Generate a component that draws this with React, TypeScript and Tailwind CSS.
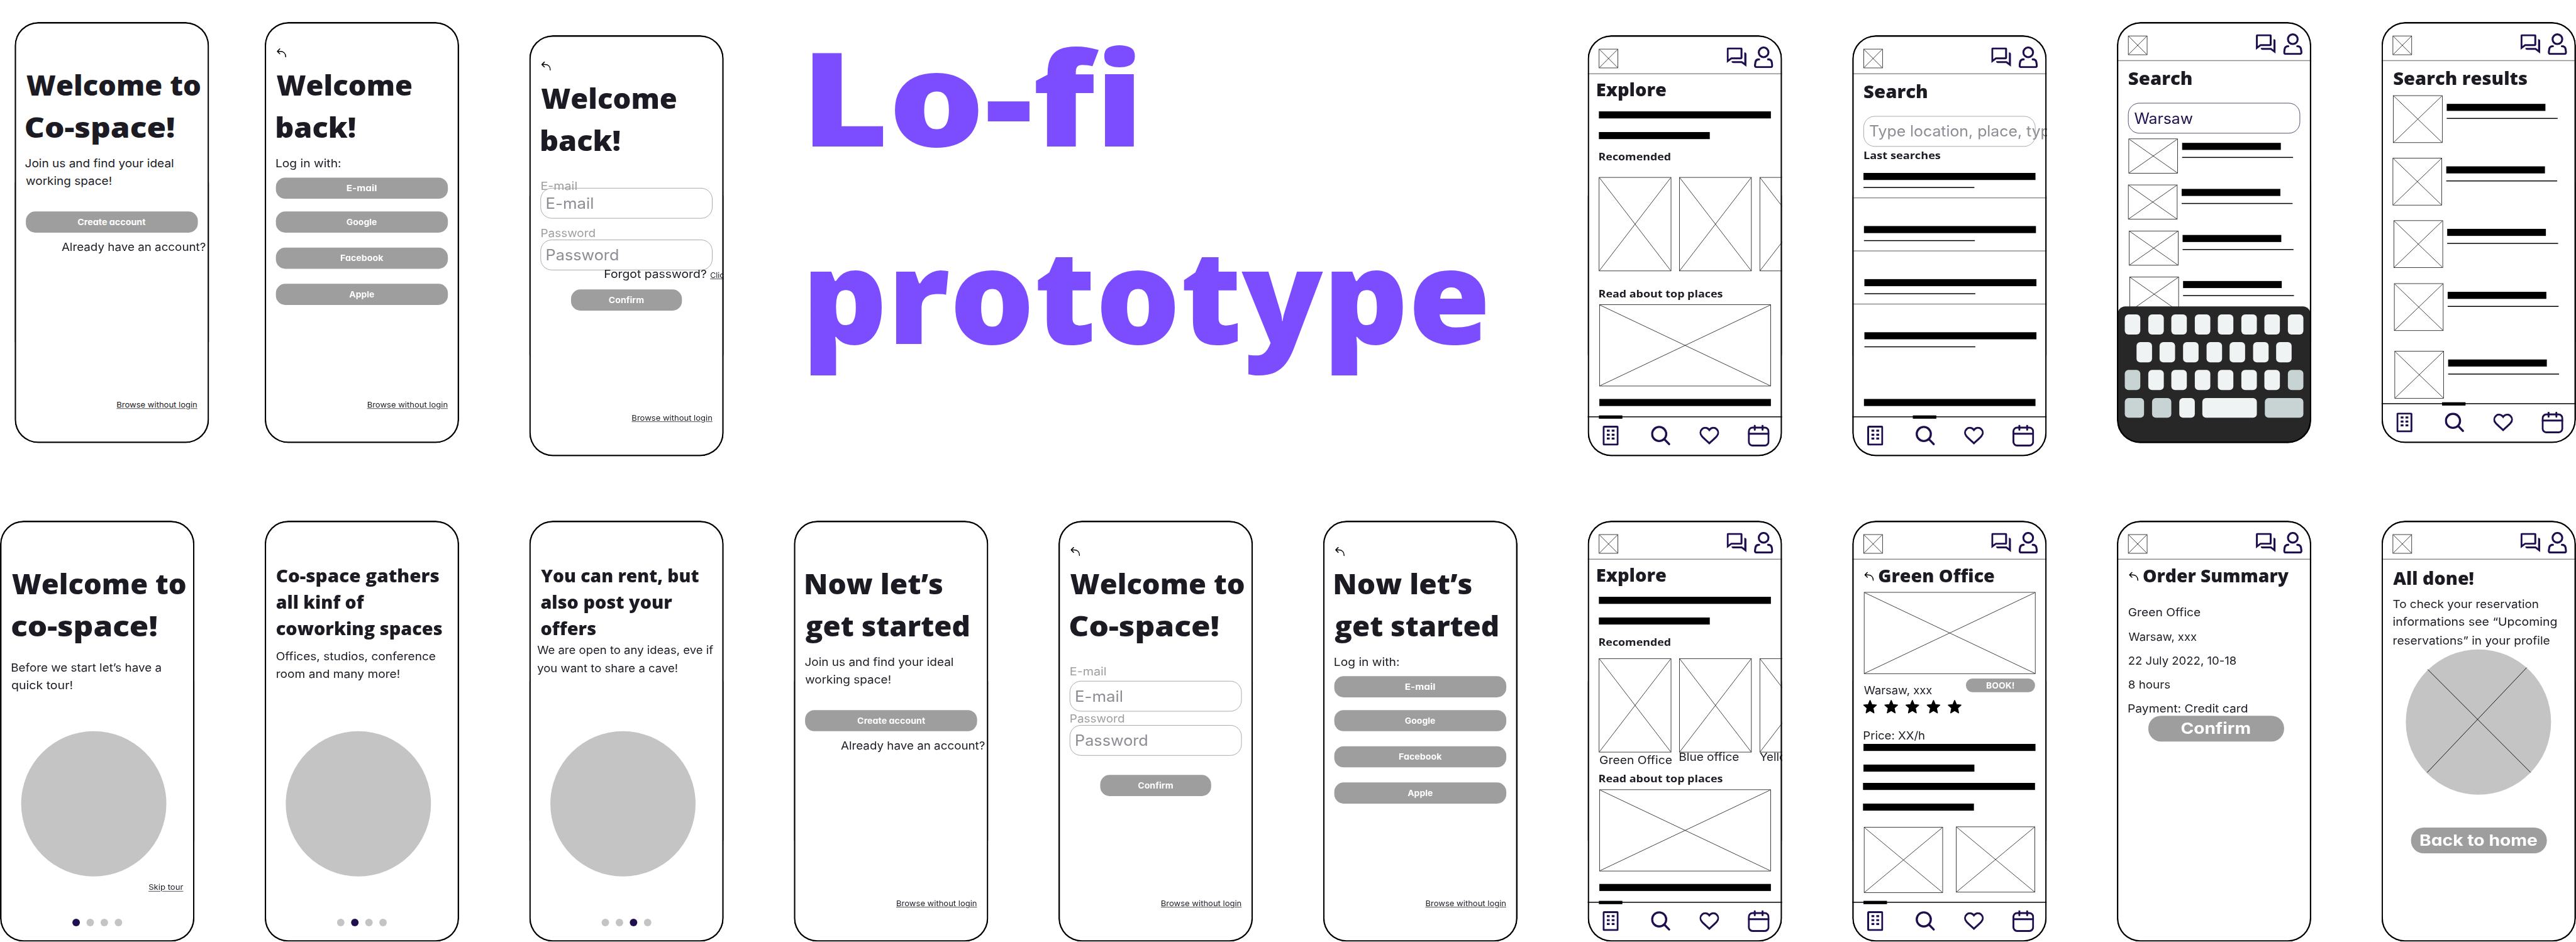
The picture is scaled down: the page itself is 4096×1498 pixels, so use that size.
import { useLayoutEffect, useRef, type ReactNode } from "react";
import clsx from "clsx";

/** A single line of text, stretched horizontally so that its ink is `w` pixels wide. */
function Line({ w, className, children }: { w: number; className?: string; children: string }) {
  const ref = useRef<HTMLSpanElement>(null);
  useLayoutEffect(() => {
    const el = ref.current;
    const ctx = document.createElement("canvas").getContext("2d");
    if (!el || !ctx) return;
    const cs = getComputedStyle(el);
    ctx.font = `${cs.fontWeight} ${cs.fontSize} ${cs.fontFamily}`;
    ctx.letterSpacing = "0.01px";
    const m = ctx.measureText(children);
    const scale = w / (m.actualBoundingBoxLeft + m.actualBoundingBoxRight);
    el.style.transform = `scaleX(${scale})`;
    el.style.marginLeft = `${m.actualBoundingBoxLeft * scale}px`;
    el.style.marginRight = `${el.offsetWidth * (scale - 1)}px`;
  }, [w, children]);
  return (
    <span ref={ref} className={clsx("block w-max origin-left whitespace-nowrap [font-variant-ligatures:none]", className)}>
      {children}
    </span>
  );
}

type TextLine = [string, number];

function Lines({ lines, className }: { lines: TextLine[]; className?: string }) {
  return (
    <div className={className}>
      {lines.map(([text, w]) => (
        <Line key={text} w={w}>
          {text}
        </Line>
      ))}
    </div>
  );
}

const display = "font-['Open_Sans',sans-serif] font-extrabold text-[#1c1b24]";
const h1 = clsx(display, "ml-[25px] text-[59px] leading-[90px]");
const h2 = clsx(display, "text-[37px] leading-[56px]");
const h3 = "ml-6 font-['Open_Sans',sans-serif] text-[22px] leading-[34px] font-bold text-[#1c1b24]";
const body = "text-[24px] leading-[38.4px] text-[#1c1b24]";

function Phone({ at, children }: { at: string; children: ReactNode }) {
  return (
    <section
      className={clsx(
        "absolute flex h-[896px] w-[414px] flex-col overflow-hidden rounded-[50px] bg-white after:pointer-events-none after:absolute after:inset-0 after:rounded-[50px] after:shadow-[inset_0_0_0_3.2px_#000] after:content-['']",
        at,
      )}
    >
      {children}
    </section>
  );
}

function Placeholder({ className }: { className?: string }) {
  return (
    <div className={clsx("shrink-0 border border-black", className)}>
      <svg className="block size-full" viewBox="0 0 100 100" preserveAspectRatio="none">
        <path d="M0 0L100 100M100 0L0 100" stroke="#000" strokeWidth="1" fill="none" vectorEffect="non-scaling-stroke" />
      </svg>
    </div>
  );
}

function Bar({ className }: { className?: string }) {
  return <div className={clsx("h-[15px] shrink-0 bg-black", className)} />;
}

function BackArrow({ className }: { className?: string }) {
  return (
    <svg className={clsx("h-[19px] w-[20px] shrink-0", className)} viewBox="0 0 20 19" fill="none" stroke="#000" strokeWidth="2" strokeLinecap="round" strokeLinejoin="round">
      <path d="M6.3 1L1 6.3L6.3 11.4M1.4 6.3H7.5C14 6.3 18.9 10.5 18.9 18" />
    </svg>
  );
}

function ChatIcon() {
  return (
    <svg className="h-[41px] w-[42px]" viewBox="0 0 42 41" fill="#200f4f">
      <path fillRule="evenodd" d="M3.5 0H30A3.5 3.5 0 0 1 33.5 3.5V21.5A3.5 3.5 0 0 1 30 25H10.5L0 33V3.5A3.5 3.5 0 0 1 3.5 0ZM4 4V25L9.3 21H29.4V4Z" />
      <path d="M37.4 10.3C40.4 10.3 42 11.6 42 14V41L31.3 33H14C11.6 33 10.3 31.6 10.3 29H32.6L37.4 32.6Z" />
    </svg>
  );
}

function PersonIcon() {
  return (
    <svg className="h-[46px] w-[41px]" viewBox="0 0 41 46" fill="none" stroke="#200f4f" strokeWidth="4.2" strokeLinecap="round">
      <circle cx="20.5" cy="12.4" r="10.3" />
      <path d="M11 27.3C6 27.3 4 28.8 3.2 33L2.2 39.5C2 42.5 3.2 43.8 6 43.8H35C37.8 43.8 39 42.5 38.8 39.5L37.8 33C37 28.8 35 27.3 30 27.3" />
    </svg>
  );
}

function BuildingIcon() {
  return (
    <svg className="h-[42px] w-[34px]" viewBox="0 0 34 42" fill="#200f4f">
      <rect x="2" y="2" width="30" height="38" rx="1.5" fill="none" stroke="#200f4f" strokeWidth="4" />
      <path d="M9 8.3h6v4.3H9zM19.3 8.3h6v4.3h-6zM9 17h6v4.2H9zM19.3 17h6v4.2h-6zM9 25h6v4.3H9zM19.3 25h6v4.3h-6z" />
    </svg>
  );
}

function SearchIcon() {
  return (
    <svg className="h-[42px] w-[41px]" viewBox="0 0 41 42" fill="none" stroke="#200f4f" strokeWidth="4.5" strokeLinecap="round">
      <circle cx="17.3" cy="17.5" r="15" />
      <path d="M28.5 28.8L38.5 39" />
    </svg>
  );
}

function HeartIcon() {
  return (
    <svg className="h-[38px] w-[42px]" viewBox="0 0 42 38" fill="none" stroke="#200f4f" strokeWidth="4" strokeLinejoin="miter">
      <path d="M21 7C17 1.5 10 .8 5.8 4.8C1 9.3 1 15.5 5 20C9.5 25.3 15.5 30 21 35.3C26.5 30 32.5 25.3 37 20C41 15.5 41 9.3 36.2 4.8C32 .8 25 1.5 21 7Z" />
    </svg>
  );
}

function CalendarIcon() {
  return (
    <svg className="size-[46px]" viewBox="0 0 46 46" fill="none" stroke="#200f4f" strokeWidth="4" strokeLinecap="round">
      <rect x="2" y="6" width="42" height="38" rx="8" />
      <path d="M2 19H44M14.7 2V10.7M31.3 2V10.7" />
    </svg>
  );
}

function Header() {
  return (
    <header className="flex h-[83px] shrink-0 items-start border-b-2 border-[#8e8c94] pl-6">
      <Placeholder className="mt-[29px] size-[41px]" />
      <div className="mt-[26px] ml-[231px]">
        <ChatIcon />
      </div>
      <div className="mt-6 ml-[16px]">
        <PersonIcon />
      </div>
    </header>
  );
}

function TabBar({ active }: { active: "home" | "search" }) {
  return (
    <nav className="relative mt-auto flex h-[85px] shrink-0 items-center border-t-2 border-black pb-[5px] pl-8">
      <div className={clsx("absolute -top-[4px] h-[7px] w-[50px] bg-black", active === "home" ? "left-6" : "left-[129px]")} />
      <BuildingIcon />
      <div className="ml-[69px]">
        <SearchIcon />
      </div>
      <div className="ml-[62px]">
        <HeartIcon />
      </div>
      <div className="ml-[61px]">
        <CalendarIcon />
      </div>
    </nav>
  );
}

function Button({ label, w, className }: { label: string; w: number; className?: string }) {
  return (
    <button
      type="button"
      className={clsx(
        "flex shrink-0 items-center justify-center bg-[#9e9e9e] font-bold text-white [font-feature-settings:'cv11']",
        className,
      )}
    >
      <Line w={w}>{label}</Line>
    </button>
  );
}

const wide = "ml-6 h-[45px] w-[366px] rounded-[20px] text-[18px]";
const large = "h-[55px] w-[289px] rounded-[27px] text-[33px]";

function Field({ text, w, className, tone = "border-[#8e8c94] text-[#8e8c94]" }: { text: string; w: number; className?: string; tone?: string }) {
  return (
    <div className={clsx("ml-6 flex h-[65px] w-[366px] shrink-0 items-center rounded-[24px] border pl-[12px] text-[32px]", tone, className)}>
      <Line w={w}>{text}</Line>
    </div>
  );
}

function FooterLink() {
  return (
    <div className="mt-auto mb-[70px] ml-[219px] text-[16px] leading-6 text-[#1c1b24] underline underline-offset-2">
      <Line w={170.5}>Browse without login</Line>
    </div>
  );
}

const welcomeTo: TextLine = ["Welcome to", 370.5];
const coSpace: TextLine = ["Co-space!", 315];
const nowLets: TextLine[] = [
  ["Now let’s", 291.5],
  ["get started", 347.5],
];
const welcomeBack: TextLine[] = [
  ["Welcome", 287.5],
  ["back!", 167.5],
];

function CreateAccount({ at, title }: { at: string; title: TextLine[] }) {
  return (
    <Phone at={at}>
      <Lines className={clsx(h1, "mt-[88px]")} lines={title} />
      <Lines
        className={clsx(body, "mt-[14px] ml-6")}
        lines={[
          ["Join us and find your ideal", 314.5],
          ["working space!", 182.5],
        ]}
      />
      <Button label="Create account" w={143.5} className={clsx(wide, "mt-[44px]")} />
      <div className={clsx(body, "mt-[12px] ml-[100px]")}>
        <Line w={307}>Already have an account?</Line>
      </div>
      <FooterLink />
    </Phone>
  );
}

function LogInWith({ at, title }: { at: string; title: TextLine[] }) {
  return (
    <Phone at={at}>
      <BackArrow className="mt-[56px] ml-[26px]" />
      <Lines className={clsx(h1, "mt-[13px]")} lines={title} />
      <div className={clsx(body, "mt-[14px] ml-[25px]")}>
        <Line w={137}>Log in with:</Line>
      </div>
      <Button label="E-mail" w={62} className={clsx(wide, "mt-[10.5px]")} />
      <Button label="Google" w={65.5} className={clsx(wide, "mt-[27px]")} />
      <Button label="Facebook" w={90.5} className={clsx(wide, "mt-[32px]")} />
      <Button label="Apple" w={54} className={clsx(wide, "mt-[32px]")} />
      <FooterLink />
    </Phone>
  );
}

function LoginForm({ at, title, returning }: { at: string; title: TextLine[]; returning?: boolean }) {
  return (
    <Phone at={at}>
      <BackArrow className="mt-[56px] ml-[26px]" />
      <Lines className={clsx(h1, "mt-[13px]")} lines={title} />
      <div className="mt-[34px] ml-[26px] text-[24px] leading-[38px] text-[#9e9e9e]">
        <Line w={74.5}>E-mail</Line>
      </div>
      <Field text="E-mail" w={99} className={returning ? "-mt-[15px]" : "mt-[1px] mb-[-16px]"} />
      <div className="mt-[13px] ml-[26px] text-[24px] leading-[38px] text-[#9e9e9e]">
        <Line w={113.5}>Password</Line>
      </div>
      <Field text="Password" w={152.5} className="-mt-[6px]" />
      {returning ? (
        <div className="-mt-[11.5px] ml-[161px] flex items-baseline gap-[7px] text-[24px] leading-[38px] text-[#1c1b24]">
          <Line w={216.5}>Forgot password?</Line>
          <div className="text-[16px] underline underline-offset-2">
            <Line w={39}>Click</Line>
          </div>
        </div>
      ) : (
        <div className="h-[27px]" />
      )}
      <Button label="Confirm" w={75} className={clsx("ml-[89px] h-[45px] w-[236px] rounded-[20px] text-[18px]", returning ? "mt-[12px]" : "mt-[14px]")} />
      <FooterLink />
    </Phone>
  );
}

function Dots({ active }: { active: number }) {
  return (
    <div className="mt-auto mb-[33px] flex justify-center gap-[14px]">
      {[0, 1, 2, 3].map((i) => (
        <div key={i} className={clsx("size-4 rounded-full", i === active ? "bg-[#200f4f]" : "bg-[#c4c4c4]")} />
      ))}
    </div>
  );
}

function TourStep({ at, active, circle, children, link }: { at: string; active: number; circle: string; children: ReactNode; link?: boolean }) {
  return (
    <Phone at={at}>
      {children}
      <div className={clsx("ml-[45px] size-[309px] shrink-0 rounded-full bg-[#c4c4c4]", circle)} />
      {link && (
        <div className="mt-[11px] ml-[316px] text-[16px] leading-6 text-[#1c1b24] underline underline-offset-2">
          <Line w={74}>Skip tour</Line>
        </div>
      )}
      <Dots active={active} />
    </Phone>
  );
}

function Explore({ at, labelled }: { at: string; labelled?: boolean }) {
  return (
    <Phone at={at}>
      <Header />
      <div className={clsx(h2, "mt-[5px] ml-[20.5px]")}>
        <Line w={147}>Explore</Line>
      </div>
      <Bar className="mt-[18px] ml-6 w-[366px]" />
      <Bar className="mt-[29px] ml-6 w-[236px]" />
      <div className={clsx(h3, "mt-[19px]")}>
        <Line w={152.5}>Recomended</Line>
      </div>
      <div className={clsx("ml-6 flex gap-[17px]", labelled ? "mt-[19px]" : "mt-[28px]")}>
        <Placeholder className="h-[200px] w-[154px]" />
        <Placeholder className="h-[200px] w-[154px]" />
        <Placeholder className="h-[200px] w-[154px]" />
      </div>
      {labelled && (
        <div className={clsx(body, "-mt-[2.5px] mb-[-27.5px] ml-[26px] grid grid-cols-[170px_170px_170px]")}>
          <Line w={153}>Green Office</Line>
          <Line w={125.5} className="-mt-[7px]">
            Blue office
          </Line>
          <Line w={150} className="-mt-[7px]">
            Yellow office
          </Line>
        </div>
      )}
      <div className={clsx(h3, "mt-[30px]")}>
        <Line w={264}>Read about top places</Line>
      </div>
      <Placeholder className="mt-[7px] ml-[25px] h-[174px] w-[365px]" />
      <Bar className="mt-[27px] ml-[25px] w-[365px]" />
      <TabBar active="home" />
    </Phone>
  );
}

function LastSearch({ className, last }: { className?: string; last?: boolean }) {
  return (
    <div className={clsx("h-[54px] shrink-0", !last && "border-b-2 border-[#8e8c94]", className)}>
      <Bar className="w-[366px]" />
      <div className="mt-[15px] h-[2px] w-[236px] bg-black" />
    </div>
  );
}

function Search({ at }: { at: string }) {
  return (
    <Phone at={at}>
      <Header />
      <div className={clsx(h2, "mt-[9px] ml-[25px]")}>
        <Line w={134.5}>Search</Line>
      </div>
      <Field text="Type location, place, type" w={403} className="mt-[24px]" />
      <div className={clsx(h3, "mt-0 ml-[25px]")}>
        <Line w={163.5}>Last searches</Line>
      </div>
      <LastSearch className="mt-[22px] pl-6" />
      <LastSearch className="mt-[59px] pl-[25px]" />
      <LastSearch className="mt-[59px] pl-[26px]" />
      <LastSearch className="mt-[59px] pl-[26px]" last />
      <Bar className="mt-[88px] ml-[25px] w-[365px]" />
      <TabBar active="search" />
    </Phone>
  );
}

function Result({ className, box, lines }: { className?: string; box: string; lines: string }) {
  return (
    <div className={clsx("flex shrink-0 gap-[9px]", className)}>
      <Placeholder className={box} />
      <div className={lines}>
        <Bar className="w-[210px]" />
        <div className="mt-[15px] h-[2px] w-[236px] bg-black" />
      </div>
    </div>
  );
}

function Key({ className, tone = "bg-[#eff3f4]" }: { className?: string; tone?: string }) {
  return <div className={clsx("h-[42.5px] rounded-[8px]", tone, className ?? "w-[33px]")} />;
}

const keyDark = "bg-[#c8d4d4]";

function Keyboard() {
  return (
    <div className="absolute inset-x-[2px] bottom-0 flex h-[291px] flex-col items-center gap-[16.7px] rounded-t-[16px] bg-[#272727] pt-[17px]">
      <div className="flex gap-[16.6px]">
        {[0, 1, 2, 3, 4, 5, 6, 7].map((i) => (
          <Key key={i} />
        ))}
      </div>
      <div className="flex gap-[16.6px]">
        {[0, 1, 2, 3, 4, 5, 6].map((i) => (
          <Key key={i} />
        ))}
      </div>
      <div className="flex gap-[16.6px]">
        {[0, 1, 2, 3, 4, 5, 6, 7].map((i) => (
          <Key key={i} tone={i === 0 || i === 7 ? keyDark : undefined} />
        ))}
      </div>
      <div className="flex gap-[16.8px]">
        <Key className="w-[41px]" tone={keyDark} />
        <Key className="w-[41px]" tone={keyDark} />
        <Key />
        <Key className="w-[115.5px]" />
        <Key className="w-[82.5px]" tone={keyDark} />
      </div>
    </div>
  );
}

function SearchTyping({ at }: { at: string }) {
  return (
    <Phone at={at}>
      <Header />
      <div className={clsx(h2, "mt-[9px] ml-[25px]")}>
        <Line w={134.5}>Search</Line>
      </div>
      <Field text="Warsaw" w={125} className="mt-[24px]" tone="border-[#200f4f] text-[#200f4f]" />
      <Result className="mt-[11px] ml-[25px]" box="h-[74px] w-[105px]" lines="mt-[9px]" />
      <Result className="mt-[24px] ml-[24px]" box="h-[74px] w-[105px]" lines="mt-[9px]" />
      <Result className="mt-[24px] ml-[25.5px]" box="h-[74px] w-[105px]" lines="mt-[9px]" />
      <Result className="mt-[24px] ml-[26.5px]" box="h-[74px] w-[105px]" lines="mt-[9px]" />
      <Keyboard />
    </Phone>
  );
}

function SearchResults({ at }: { at: string }) {
  return (
    <Phone at={at}>
      <Header />
      <div className={clsx(h2, "mt-[9px] ml-[26px]")}>
        <Line w={284}>Search results</Line>
      </div>
      <Result className="mt-[8px] ml-[25px]" box="h-[101px] w-[105px]" lines="mt-[18px]" />
      <Result className="mt-[32px] ml-[24px]" box="h-[101px] w-[105px]" lines="mt-[18px]" />
      <Result className="mt-[32px] ml-[26px]" box="h-[101px] w-[105px]" lines="mt-[18px]" />
      <Result className="mt-[33px] ml-[27px]" box="h-[101px] w-[105px]" lines="mt-[18px]" />
      <Result className="mt-[43px] ml-[28px]" box="h-[101px] w-[105px]" lines="mt-[18px]" />
      <TabBar active="search" />
    </Phone>
  );
}

function Star() {
  return (
    <svg className="size-[30px]" viewBox="0 0 30 30" fill="#000" stroke="#000" strokeWidth="2" strokeLinejoin="round">
      <path d="M15 1.5L18.8 10.3L28.5 11.3L21.3 17.8L23.3 28L15 22.8L6.7 28L8.7 17.8L1.5 11.3L11.2 10.3Z" />
    </svg>
  );
}

function OfficeDetails({ at }: { at: string }) {
  return (
    <Phone at={at}>
      <Header />
      <div className="mt-[6px] flex pl-[26px]">
        <BackArrow className="mt-[20px]" />
        <div className={clsx(h2, "ml-[10px]")}>
          <Line w={246.5}>Green Office</Line>
        </div>
      </div>
      <Placeholder className="mt-[6.5px] ml-[25px] h-[174px] w-[365px]" />
      <div className="mr-[25px] ml-[25px] flex h-[54px] items-start justify-between">
        <div className={clsx(body, "mt-[16px]")}>
          <Line w={145}>Warsaw, xxx</Line>
        </div>
        <Button label="BOOK!" w={58.5} className="mt-[10px] h-[29px] w-[147px] rounded-[14px] text-[18px]" />
      </div>
      <div className="mt-[1px] ml-[23px] flex gap-[15px]">
        <Star />
        <Star />
        <Star />
        <Star />
        <Star />
      </div>
      <div className={clsx(body, "mt-[27px] ml-[25px]")}>
        <Line w={129}>Price: XX/h</Line>
      </div>
      <Bar className="-mt-[0.5px] ml-6 w-[366px]" />
      <Bar className="mt-[29px] ml-6 w-[236px]" />
      <Bar className="mt-[24px] ml-[23px] w-[366px]" />
      <Bar className="mt-[29px] ml-[23px] w-[236px]" />
      <div className="mt-[34px] ml-[25px] flex gap-[28px]">
        <Placeholder className="mt-px h-[140px] w-[168px]" />
        <Placeholder className="h-[140px] w-[168px]" />
      </div>
      <TabBar active="home" />
    </Phone>
  );
}

function OrderSummary({ at }: { at: string }) {
  return (
    <Phone at={at}>
      <Header />
      <div className="mt-[6px] flex pl-[26px]">
        <BackArrow className="mt-[20px]" />
        <div className={clsx(h2, "ml-[10px]")}>
          <Line w={310}>Order Summary</Line>
        </div>
      </div>
      <Lines
        className="mt-[24.5px] ml-[25px] text-[24px] leading-[51px] text-[#1c1b24]"
        lines={[
          ["Green Office", 152.5],
          ["Warsaw, xxx", 145],
          ["22 July 2022, 10-18", 229],
          ["8 hours", 88.5],
          ["Payment: Credit card", 252.5],
        ]}
      />
      <Button label="Confirm" w={147} className={clsx(large, "-mt-[10px] ml-[67px]")} />
    </Phone>
  );
}

function AllDone({ at }: { at: string }) {
  return (
    <Phone at={at}>
      <Header />
      <div className={clsx(h2, "mt-[11px] ml-[25px]")}>
        <Line w={171.5}>All done!</Line>
      </div>
      <Lines
        className={clsx(body, "mt-[9px] ml-[25px]")}
        lines={[
          ["To check your reservation", 309],
          ["informations see “Upcoming", 348],
          ["reservations” in your profile", 333],
        ]}
      />
      <div className="mt-0 ml-[52px] size-[309px] shrink-0 rounded-full bg-[#c4c4c4]">
        <svg className="block size-full" viewBox="0 0 309 309" stroke="#000" strokeWidth="1.2">
          <path d="M46.5 42.5L265.5 261.8M257.3 38.5L45.5 261.8" />
        </svg>
      </div>
      <Button label="Back to home" w={246.5} className={clsx(large, "mt-[70px] ml-[63px]")} />
    </Phone>
  );
}

export default function App() {
  return (
    <main className="h-screen w-screen overflow-hidden bg-white">
      <div className="relative h-[2004px] w-[5481px] origin-top-left scale-[0.7473] font-[Inter,sans-serif]">
        <CreateAccount at="left-[30.5px] top-[47px]" title={[welcomeTo, coSpace]} />
        <LogInWith at="left-[563px] top-[47px]" title={welcomeBack} />
        <LoginForm at="left-[1126px] top-[75px]" title={welcomeBack} returning />

        <h1 className="absolute top-[-5px] left-[1724px] font-['Open_Sans',sans-serif] text-[277px] leading-[420px] font-extrabold text-[#7c4dff]">
          <Line w={691}>Lo-fi</Line>
          <Line w={1437}>prototype</Line>
        </h1>

        <Explore at="left-[3378px] top-[75px]" />
        <Search at="left-[3941px] top-[75px]" />
        <SearchTyping at="left-[4504px] top-[47px]" />
        <SearchResults at="left-[5067px] top-[47px]" />

        <TourStep at="left-0 top-[1108px]" active={0} circle="mt-[77px]" link>
          <Lines className={clsx(h1, "mt-[88px]")} lines={[welcomeTo, ["co-space!", 308]]} />
          <Lines
            className={clsx(body, "mt-[26px] ml-[25px]")}
            lines={[
              ["Before we start let’s have a", 317.5],
              ["quick tour!", 129.5],
            ]}
          />
        </TourStep>
        <TourStep at="left-[563px] top-[1108px]" active={1} circle="mt-[101px]">
          <Lines
            className={clsx(h2, "mt-[89px] ml-[25px]")}
            lines={[
              ["Co-space gathers", 346],
              ["all kinf of", 188],
              ["coworking spaces", 352.5],
            ]}
          />
          <Lines
            className={clsx(body, "mt-[13px] ml-[25px]")}
            lines={[
              ["Offices, studios, conference", 338.5],
              ["room and many more!", 262.5],
            ]}
          />
        </TourStep>
        <TourStep at="left-[1126px] top-[1108px]" active={2} circle="mt-[114px]">
          <Lines
            className={clsx(h2, "mt-[89px] ml-[25px]")}
            lines={[
              ["You can rent, but", 335.5],
              ["also post your", 279],
              ["offers", 116.5],
            ]}
          />
          <Lines
            className={clsx(body, "ml-[17px]")}
            lines={[
              ["We are open to any ideas, eve if", 375],
              ["you want to share a cave!", 299],
            ]}
          />
        </TourStep>
        <CreateAccount at="left-[1689px] top-[1108px]" title={nowLets} />
        <LoginForm at="left-[2252px] top-[1108px]" title={[welcomeTo, coSpace]} />
        <LogInWith at="left-[2815px] top-[1108px]" title={nowLets} />
        <Explore at="left-[3378px] top-[1108px]" labelled />
        <OfficeDetails at="left-[3941px] top-[1108px]" />
        <OrderSummary at="left-[4504px] top-[1108px]" />
        <AllDone at="left-[5067px] top-[1108px]" />
      </div>
    </main>
  );
}
